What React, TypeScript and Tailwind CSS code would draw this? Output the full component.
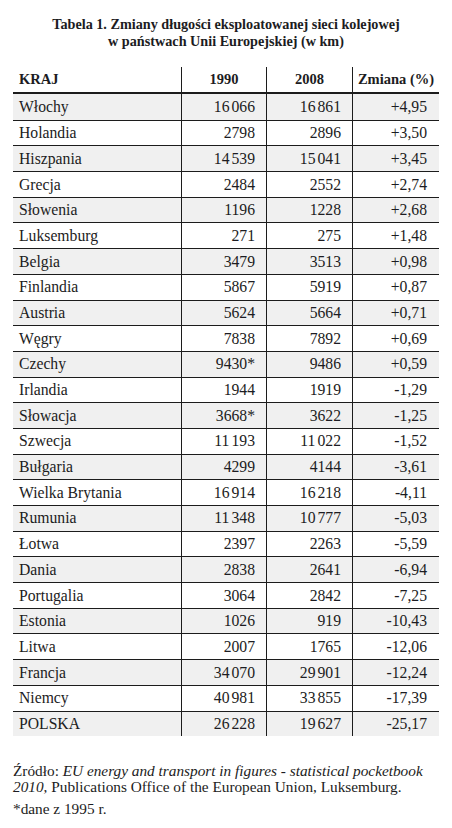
import React from "react";

type Row = { kraj: string; a: string; b: string; c: string };

const rows: Row[] = [
  { kraj: "Włochy", a: "16066", b: "16861", c: "+4,95" },
  { kraj: "Holandia", a: "2798", b: "2896", c: "+3,50" },
  { kraj: "Hiszpania", a: "14539", b: "15041", c: "+3,45" },
  { kraj: "Grecja", a: "2484", b: "2552", c: "+2,74" },
  { kraj: "Słowenia", a: "1196", b: "1228", c: "+2,68" },
  { kraj: "Luksemburg", a: "271", b: "275", c: "+1,48" },
  { kraj: "Belgia", a: "3479", b: "3513", c: "+0,98" },
  { kraj: "Finlandia", a: "5867", b: "5919", c: "+0,87" },
  { kraj: "Austria", a: "5624", b: "5664", c: "+0,71" },
  { kraj: "Węgry", a: "7838", b: "7892", c: "+0,69" },
  { kraj: "Czechy", a: "9430*", b: "9486", c: "+0,59" },
  { kraj: "Irlandia", a: "1944", b: "1919", c: "-1,29" },
  { kraj: "Słowacja", a: "3668*", b: "3622", c: "-1,25" },
  { kraj: "Szwecja", a: "11193", b: "11022", c: "-1,52" },
  { kraj: "Bułgaria", a: "4299", b: "4144", c: "-3,61" },
  { kraj: "Wielka Brytania", a: "16914", b: "16218", c: "-4,11" },
  { kraj: "Rumunia", a: "11348", b: "10777", c: "-5,03" },
  { kraj: "Łotwa", a: "2397", b: "2263", c: "-5,59" },
  { kraj: "Dania", a: "2838", b: "2641", c: "-6,94" },
  { kraj: "Portugalia", a: "3064", b: "2842", c: "-7,25" },
  { kraj: "Estonia", a: "1026", b: "919", c: "-10,43" },
  { kraj: "Litwa", a: "2007", b: "1765", c: "-12,06" },
  { kraj: "Francja", a: "34070", b: "29901", c: "-12,24" },
  { kraj: "Niemcy", a: "40981", b: "33855", c: "-17,39" },
  { kraj: "POLSKA", a: "26228", b: "19627", c: "-25,17" },
];

function Num({ v }: { v: string }) {
  if (/^\d{5}$/.test(v)) {
    return (
      <span>
        {v.slice(0, 2)}
        <span className="ml-[2px]">{v.slice(2)}</span>
      </span>
    );
  }
  return <span>{v}</span>;
}

export default function App() {
  return (
    <div
      className="w-[452px] h-[828px] bg-white text-[#1c1c22] overflow-hidden"
      style={{ fontFamily: '"Liberation Serif", "DejaVu Serif", serif' }}
    >
      <div className="pt-[16px] text-center font-bold text-[14.2px] leading-[17px]">
        <div>Tabela 1. Zmiany długości eksploatowanej sieci kolejowej</div>
        <div>w państwach Unii Europejskiej (w km)</div>
      </div>

      <div className="ml-[13px] mt-[17px] w-[426px]">
        <div className="grid grid-cols-[168px_85px_86px_87px] h-[27px] border-b-2 border-[#1c1c1c] font-bold text-[14.5px]">
          <div className="pl-[6px] flex items-center">KRAJ</div>
          <div className="border-l border-[#1c1c1c] flex items-center justify-center">1990</div>
          <div className="border-l border-[#1c1c1c] flex items-center justify-center">2008</div>
          <div className="border-l border-[#1c1c1c] flex items-center justify-center">Zmiana (%)</div>
        </div>
        {rows.map((r, i) => (
          <div
            key={r.kraj}
            className={
              "grid grid-cols-[168px_85px_86px_87px] h-[25.7px] text-[15.7px] leading-none " +
              (i % 2 === 0 ? "bg-[#f0f0f0] " : "bg-white ") +
              (i > 0 ? "border-t border-[#1c1c1c]" : "")
            }
          >
            <div className="pl-[6px] flex items-center">{r.kraj}</div>
            <div className="border-l border-[#1c1c1c] flex items-center justify-end pr-[11px]">
              <Num v={r.a} />
            </div>
            <div className="border-l border-[#1c1c1c] flex items-center justify-end pr-[11px]">
              <Num v={r.b} />
            </div>
            <div className="border-l border-[#1c1c1c] flex items-center justify-end pr-[12px]">
              {r.c}
            </div>
          </div>
        ))}
      </div>

      <div className="ml-[13px] mt-[27px] w-[420px] text-[15.3px] leading-[16px]">
        <div>
          Źródło: <i>EU energy and transport in figures - statistical pocketbook 2010</i>, Publications Office of the European Union, Luksemburg.
        </div>
        <div className="mt-[6px]">*dane z 1995 r.</div>
      </div>
    </div>
  );
}
